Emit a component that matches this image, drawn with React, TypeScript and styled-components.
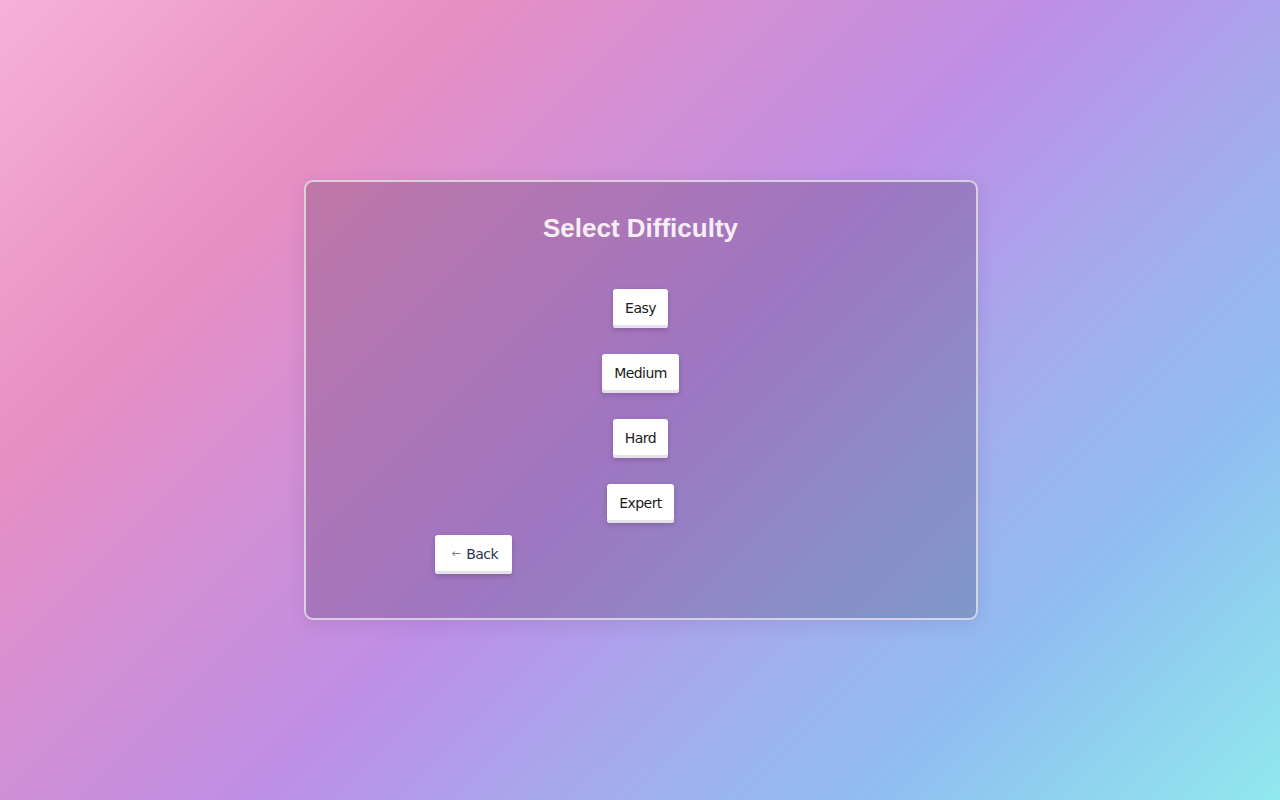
import React from "react";
import styled, { createGlobalStyle } from "styled-components";

const Global = createGlobalStyle`
  html, body { margin: 0; padding: 0; }
  body {
    min-height: 100vh;
    font-family: "DejaVu Sans", sans-serif;
  }
`;

const Page = styled.div`
  width: 100%;
  height: 800px;
  display: flex;
  align-items: center;
  justify-content: center;
  background: linear-gradient(
    135deg,
    #f5b1da 0%,
    #e88fc3 22%,
    #bd8fe6 51%,
    #a2aeee 68%,
    #90bdf1 80%,
    #90e9ec 100%
  );
`;

const Card = styled.div`
  box-sizing: border-box;
  width: 674px;
  height: 440px;
  margin-left: 1px;
  padding: 31px 40px 0;
  border: 2px solid rgba(225, 225, 230, 0.85);
  border-radius: 9px;
  background: rgba(40, 20, 50, 0.2);
  box-shadow: 0 4px 18px rgba(80, 40, 100, 0.12);
  display: flex;
  flex-direction: column;
  align-items: center;
`;

const Title = styled.h2`
  margin: 0 0 46px;
  font-family: "Liberation Sans", Arial, sans-serif;
  font-weight: 700;
  font-size: 26px;
  line-height: 30px;
  color: #f7eef5;
`;

const Options = styled.div`
  display: flex;
  flex-direction: column;
  align-items: center;
  gap: 26px;
`;

const Button = styled.button<{ $back?: boolean }>`
  box-sizing: border-box;
  height: 39px;
  padding: ${(p) => (p.$back ? "0 14px 2px 17px" : "0 12px 2px")};
  border: none;
  border-radius: 3px;
  background: #ffffff;
  box-shadow: inset 0 -3px 0 #e4e2e8, 0 2px 5px rgba(60, 30, 80, 0.25);
  font-family: "DejaVu Sans", Tahoma, sans-serif;
  font-size: 14px;
  letter-spacing: -0.55px;
  color: ${(p) => (p.$back ? "#2a3555" : "#1a1a1a")};
  cursor: pointer;
  display: inline-flex;
  align-items: center;
  gap: 6px;
`;

const Footer = styled.div`
  width: 412px;
  margin-top: 12px;
  display: flex;
  justify-content: flex-start;
`;

const Arrow = styled.span`
  font-size: 11px;
  color: #7a7a88;
`;

const levels = ["Easy", "Medium", "Hard", "Expert"];

export default function App() {
  return (
    <>
      <Global />
      <Page>
        <Card>
          <Title>Select Difficulty</Title>
          <Options>
            {levels.map((l) => (
              <Button key={l}>{l}</Button>
            ))}
          </Options>
          <Footer>
            <Button $back>
              <Arrow>←</Arrow>Back
            </Button>
          </Footer>
        </Card>
      </Page>
    </>
  );
}
